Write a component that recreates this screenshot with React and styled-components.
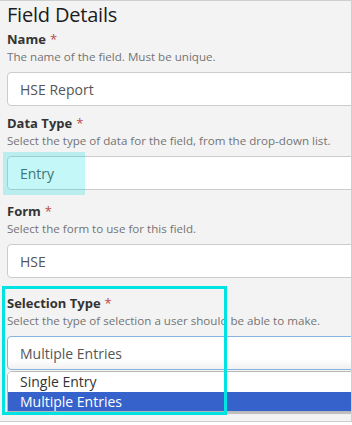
import React from "react";
import styled, { createGlobalStyle } from "styled-components";

const Global = createGlobalStyle`
  html, body { margin: 0; padding: 0; background: #ffffff; }
  body { font-family: "Open Sans", "Noto Sans", sans-serif; }
  * { box-sizing: border-box; }
`;

const Panel = styled.div`
  width: 352px;
  height: 422px;
  background: #f3f3f3;
  border-top: 1px solid #cfcfcf;
  border-right: 1px solid #cfcfcf;
  border-bottom: 1px solid #cfcfcf;
  padding: 1px 0 0 7px;
  overflow: hidden;
  position: relative;
`;

const Heading = styled.h2`
  margin: 0 0 2px;
  font-size: 20px;
  line-height: 26px;
  font-weight: 400;
  color: #1c1c1c;
  letter-spacing: -0.2px;
`;

const Field = styled.div`
  position: relative;
  margin-top: ${(p) => p.$top || 0}px;
`;

const Label = styled.div`
  font-size: 13px;
  line-height: 18px;
  font-weight: 700;
  color: #333;
`;

const Req = styled.span`
  color: #b94a48;
  font-weight: 400;
  margin-left: 4px;
`;

const Help = styled.div`
  font-size: 11.6px;
  line-height: 18px;
  color: #737373;
  margin-bottom: 6px;
  white-space: nowrap;
`;

const InputWrap = styled.div`
  position: relative;
`;

const Input = styled.div`
  width: 400px;
  height: 34px;
  border: 1px solid ${(p) => (p.$focus ? "#86b3e0" : "#cccccc")};
  border-radius: 4px;
  background: ${(p) =>
    p.$focus ? "linear-gradient(#ffffff 70%, #f1f1f1)" : "#ffffff"};
  padding: 0 12px;
  display: flex;
  align-items: center;
  font-size: 14px;
  color: #555;
`;

const Tint = styled.div`
  position: absolute;
  top: -4px;
  left: -4px;
  width: 82px;
  height: 43px;
  background: rgba(0, 222, 222, 0.23);
  pointer-events: none;
`;

const Menu = styled.ul`
  position: absolute;
  top: 35px;
  left: 0;
  width: 400px;
  margin: 0;
  padding: 0;
  list-style: none;
  background: #fff;
  border: 1px solid #b8b8b8;
  border-radius: 5px 0 0 0;
  box-shadow: 0 2px 1px #bdbdbd;
  overflow: hidden;
`;

const Option = styled.li`
  height: ${(p) => (p.$active ? 19 : 20)}px;
  line-height: ${(p) => (p.$active ? 19 : 20)}px;
  padding-left: 12px;
  font-size: 14px;
  color: ${(p) => (p.$active ? "#fff" : "#333")};
  background: ${(p) => (p.$active ? "#3662cb" : "#fff")};
`;

const Frame = styled.div`
  position: absolute;
  top: -8px;
  left: -5px;
  width: 225px;
  height: 129px;
  border: 3px solid #00e3e3;
  pointer-events: none;
  z-index: 2;
`;

export default function App() {
  return (
    <>
      <Global />
      <Panel>
        <Heading>Field Details</Heading>
        <Field>
          <Label>
            Name<Req>*</Req>
          </Label>
          <Help>The name of the field. Must be unique.</Help>
          <InputWrap>
            <Input>HSE Report</Input>
          </InputWrap>
        </Field>
        <Field $top={8}>
          <Label>
            Data Type<Req>*</Req>
          </Label>
          <Help>Select the type of data for the field, from the drop-down list.</Help>
          <InputWrap>
            <Input>Entry</Input>
            <Tint />
          </InputWrap>
        </Field>
        <Field $top={12}>
          <Label>
            Form<Req>*</Req>
          </Label>
          <Help>Select the form to use for this field.</Help>
          <InputWrap>
            <Input>HSE</Input>
          </InputWrap>
        </Field>
        <Field $top={16}>
          <Frame />
          <Label>
            Selection Type<Req>*</Req>
          </Label>
          <Help>Select the type of selection a user should be able to make.</Help>
          <InputWrap>
            <Input $focus>Multiple Entries</Input>
            <Menu>
              <Option>Single Entry</Option>
              <Option $active>Multiple Entries</Option>
            </Menu>
          </InputWrap>
        </Field>
      </Panel>
    </>
  );
}
